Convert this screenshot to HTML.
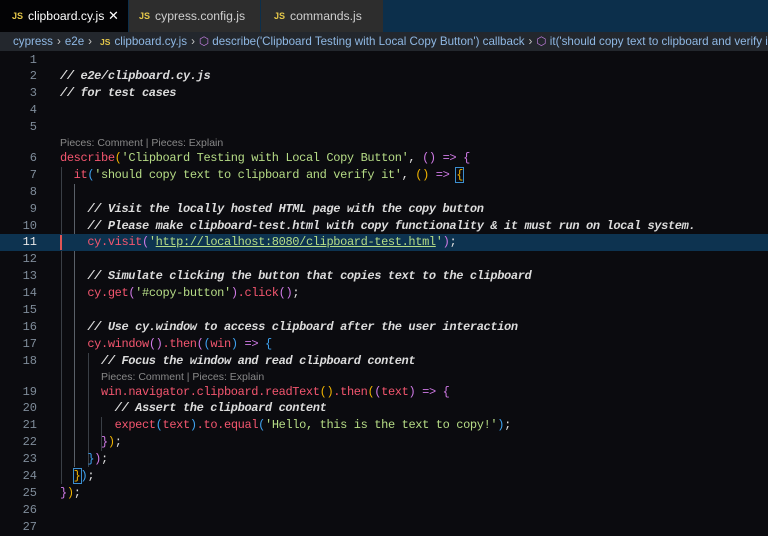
<!DOCTYPE html>
<html><head><meta charset="utf-8"><style>
*{margin:0;padding:0;box-sizing:border-box}
body{width:768px;height:534px;overflow:hidden;background:#0b0b0f;font-family:"Liberation Sans",sans-serif;position:relative}
.tabs{position:absolute;left:0;top:0;width:768px;height:32px;background:#0c2f4b}
.tab{position:absolute;top:0;height:32px;background:#2d2d2d;color:#cfcfcf;font-size:12.2px;line-height:32px;white-space:nowrap}
.tab .js{color:#e6c84a;font-size:9px;font-weight:bold;margin-right:5px;vertical-align:1px}
.bc{position:absolute;left:0;top:32px;width:768px;height:19px;background:#23272d;color:#8fb8e4;font-size:11.6px;line-height:19px;padding-left:13px;white-space:nowrap;overflow:hidden}
.bc .s{color:#c7c7c7;margin:0 4px}
.bc .js{color:#e6c84a;font-size:8.5px;font-weight:bold;margin:0 4px}
.bc .cube{color:#c27fe0}
.ed{position:absolute;left:0;top:51.5px;width:768px;font-family:"Liberation Mono",monospace;font-size:12px;letter-spacing:-0.37px;color:#ddd}
.l{height:16.9px;line-height:16.9px;white-space:pre;position:relative}
.n{position:absolute;left:0;width:37px;text-align:right;color:#7f8c9a;letter-spacing:0}
.c{position:absolute;left:60px}
.lens{height:14px;line-height:14px;font-family:"Liberation Sans",sans-serif;font-size:10.5px;letter-spacing:0;color:#888;white-space:pre;position:relative}
.cm{font-style:italic;font-weight:bold;color:#dcdcdc}
.r{color:#f4566f}.g{color:#b6dc86}.y{color:#f0b400}.p{color:#d07ae6}.b{color:#3ea2f0}.w{color:#e0e0e0}
.hl{background:#0d3350}
.guide{position:absolute;width:1px;background:#3a3f46}
</style></head><body>
<div class="tabs">
<div class="tab" style="left:0;width:128px;background:#030305;color:#fff;padding-left:12px"><span class="js">JS</span>clipboard.cy.js<span style="position:absolute;left:108px;font-size:13px">✕</span></div>
<div class="tab" style="left:129px;width:131px;padding-left:10px"><span class="js">JS</span>cypress.config.js</div>
<div class="tab" style="left:261px;width:122px;padding-left:13px"><span class="js">JS</span>commands.js</div>
</div>
<div class="bc">cypress<span class="s">›</span>e2e<span class="s">›</span><span class="js">JS</span>clipboard.cy.js<span class="s">›</span><span class="cube">⬡</span> describe('Clipboard Testing with Local Copy Button') callback<span class="s">›</span><span class="cube">⬡</span> it('should copy text to clipboard and verify it')</div>
<div class="guide" style="left:61px;top:167px;height:317px"></div>
<div class="guide" style="left:74px;top:184px;height:283px;background:#5a6068"></div>
<div class="guide" style="left:88px;top:353px;height:114px"></div>
<div class="guide" style="left:101px;top:417px;height:34px"></div>
<div class="ed">
<div class="l"><span class="n">1</span></div>
<div class="l"><span class="n">2</span><span class="c cm">// e2e/clipboard.cy.js</span></div>
<div class="l"><span class="n">3</span><span class="c cm">// for test cases</span></div>
<div class="l"><span class="n">4</span></div>
<div class="l"><span class="n">5</span></div>
<div class="lens"><span style="position:absolute;left:60px">Pieces: Comment | Pieces: Explain</span></div>
<div class="l"><span class="n">6</span><span class="c"><span class="r">describe</span><span class="y">(</span><span class="g">'Clipboard Testing with Local Copy Button'</span><span class="w">, </span><span class="p">() =&gt; {</span></span></div>
<div class="l"><span class="n">7</span><span class="c">  <span class="r">it</span><span class="b">(</span><span class="g">'should copy text to clipboard and verify it'</span><span class="w">, </span><span class="y">()</span> <span class="p">=&gt;</span> <span class="y" style="outline:1px solid #3c8fd0">{</span></span></div>
<div class="l"><span class="n">8</span></div>
<div class="l"><span class="n">9</span><span class="c cm">    // Visit the locally hosted HTML page with the copy button</span></div>
<div class="l"><span class="n">10</span><span class="c cm">    // Please make clipboard-test.html with copy functionality &amp; it must run on local system.</span></div>
<div class="l hl"><span style="position:absolute;left:60px;top:1px;width:2px;height:15px;background:#e05555"></span><span class="n" style="color:#e8e8e8">11</span><span class="c">    <span class="r">cy.visit</span><span class="p">(</span><span class="g">'<span style="text-decoration:underline">http://localhost:8080/clipboard-test.html</span>'</span><span class="p">)</span><span class="w">;</span></span></div>
<div class="l"><span class="n">12</span></div>
<div class="l"><span class="n">13</span><span class="c cm">    // Simulate clicking the button that copies text to the clipboard</span></div>
<div class="l"><span class="n">14</span><span class="c">    <span class="r">cy.get</span><span class="p">(</span><span class="g">'#copy-button'</span><span class="p">)</span><span class="r">.click</span><span class="p">()</span><span class="w">;</span></span></div>
<div class="l"><span class="n">15</span></div>
<div class="l"><span class="n">16</span><span class="c cm">    // Use cy.window to access clipboard after the user interaction</span></div>
<div class="l"><span class="n">17</span><span class="c">    <span class="r">cy.window</span><span class="p">()</span><span class="r">.then</span><span class="p">(</span><span class="b">(</span><span class="r">win</span><span class="b">)</span> <span class="p">=&gt;</span> <span class="b">{</span></span></div>
<div class="l"><span class="n">18</span><span class="c cm">      // Focus the window and read clipboard content</span></div>
<div class="lens"><span style="position:absolute;left:101px">Pieces: Comment | Pieces: Explain</span></div>
<div class="l"><span class="n">19</span><span class="c">      <span class="r">win.navigator.clipboard.readText</span><span class="y">()</span><span class="r">.then</span><span class="y">(</span><span class="p">(</span><span class="r">text</span><span class="p">)</span> <span class="p">=&gt;</span> <span class="p">{</span></span></div>
<div class="l"><span class="n">20</span><span class="c cm">        // Assert the clipboard content</span></div>
<div class="l"><span class="n">21</span><span class="c">        <span class="r">expect</span><span class="b">(</span><span class="r">text</span><span class="b">)</span><span class="r">.to.equal</span><span class="b">(</span><span class="g">'Hello, this is the text to copy!'</span><span class="b">)</span><span class="w">;</span></span></div>
<div class="l"><span class="n">22</span><span class="c">      <span class="p">}</span><span class="y">)</span><span class="w">;</span></span></div>
<div class="l"><span class="n">23</span><span class="c">    <span class="b">}</span><span class="p">)</span><span class="w">;</span></span></div>
<div class="l"><span class="n">24</span><span class="c">  <span class="y" style="outline:1px solid #3c8fd0">}</span><span class="b">)</span><span class="w">;</span></span></div>
<div class="l"><span class="n">25</span><span class="c"><span class="p">}</span><span class="y">)</span><span class="w">;</span></span></div>
<div class="l"><span class="n">26</span></div>
<div class="l"><span class="n">27</span></div>
</div>
</body></html>
